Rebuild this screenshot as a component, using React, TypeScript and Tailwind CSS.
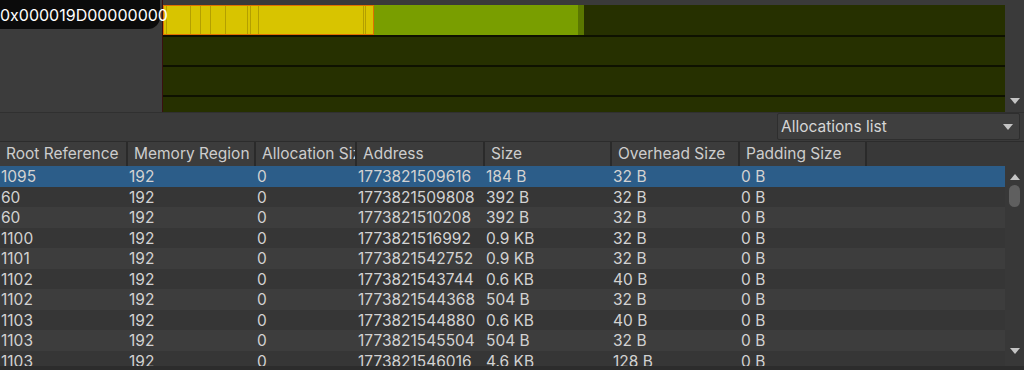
import React from "react";

const rows = [
  ["1095", "192", "0", "1773821509616", "184 B", "32 B", "0 B"],
  ["60", "192", "0", "1773821509808", "392 B", "32 B", "0 B"],
  ["60", "192", "0", "1773821510208", "392 B", "32 B", "0 B"],
  ["1100", "192", "0", "1773821516992", "0.9 KB", "32 B", "0 B"],
  ["1101", "192", "0", "1773821542752", "0.9 KB", "32 B", "0 B"],
  ["1102", "192", "0", "1773821543744", "0.6 KB", "40 B", "0 B"],
  ["1102", "192", "0", "1773821544368", "504 B", "32 B", "0 B"],
  ["1103", "192", "0", "1773821544880", "0.6 KB", "40 B", "0 B"],
  ["1103", "192", "0", "1773821545504", "504 B", "32 B", "0 B"],
  ["1103", "192", "0", "1773821546016", "4.6 KB", "128 B", "0 B"],
];

const cols = [
  { name: "Root Reference", w: "w-[128px]" },
  { name: "Memory Region", w: "w-[128px]" },
  { name: "Allocation Size", w: "w-[101px]" },
  { name: "Address", w: "w-[128px]" },
  { name: "Size", w: "w-[127px]" },
  { name: "Overhead Size", w: "w-[128px]" },
  { name: "Padding Size", w: "w-[127px]" },
];

const stripes = [2, 26, 36, 46, 61, 83, 86, 94, 199, 201];

function TriDown({ className = "" }: { className?: string }) {
  return (
    <svg width="10" height="6" viewBox="0 0 10 6" className={className}>
      <path d="M0 0 L10 0 L5 6 Z" fill="#c4c4c4" />
    </svg>
  );
}
function TriUp({ className = "" }: { className?: string }) {
  return (
    <svg width="10" height="6" viewBox="0 0 10 6" className={className}>
      <path d="M0 6 L10 6 L5 0 Z" fill="#c4c4c4" />
    </svg>
  );
}

export default function App() {
  return (
    <div
      className="w-[1024px] h-[370px] overflow-hidden bg-[#383838] flex flex-col text-[15.5px] text-[#d2d2d2]"
      style={{ fontFamily: "Inter, 'Noto Sans', sans-serif" }}
    >
      {/* Top chart area */}
      <div className="flex h-[112px] shrink-0">
        <div className="w-[162px] bg-[#3c3c3c] relative">
          <div className="h-[29px] bg-[#0b0b0b] rounded-br-[12px] w-[160px] flex items-center">
            <span className="relative z-10 whitespace-nowrap text-[16px] leading-none text-white pl-0">
              0x000019D00000000
            </span>
          </div>
        </div>
        <div className="flex-1 bg-[#3a3a3a] flex flex-col border-l border-[#3a1010]">
          <div className="h-[5px] shrink-0" />
          <div className="flex-1 flex flex-col gap-[2px] bg-[#0e1100] overflow-hidden">
            <div className="h-[30px] shrink-0 flex bg-[#263000]">
              <div className="w-[211px] h-full bg-[#d8c400] border-[1.5px] border-[#e07000] relative">
                {stripes.map((x) => (
                  <div
                    key={x}
                    className="absolute top-0 bottom-0 w-px bg-[#b39f00]"
                    style={{ left: x }}
                  />
                ))}
              </div>
              <div className="w-[204px] h-full bg-[#799e00]" />
              <div className="w-[6px] h-full bg-[#5a7700]" />
            </div>
            <div className="h-[28px] shrink-0 bg-[#263000]" />
            <div className="h-[28px] shrink-0 bg-[#263000]" />
            <div className="h-[28px] shrink-0 bg-[#263000]" />
          </div>
        </div>
        <div className="w-[19px] bg-[#3a3a3a] flex flex-col justify-end items-center pb-[8px]">
          <TriDown />
        </div>
      </div>

      {/* Toolbar */}
      <div className="h-[29px] shrink-0 bg-[#3a3a3a] border-t border-[#303030] flex justify-end pr-[4px]">
        <div className="w-[243px] h-[27px] bg-[#3f3f3f] border border-[#2e2e2e] rounded-[2px] flex items-center justify-between pl-[3px] pr-[6px]">
          <span className="text-[15.5px] text-[#d6d6d6]">Allocations list</span>
          <TriDown />
        </div>
      </div>

      {/* Header */}
      <div className="h-[25px] shrink-0 flex bg-[#383838] border-t border-[#2c2c2c]">
        {cols.map((c) => (
          <div
            key={c.name}
            className={`${c.w} shrink-0 h-full bg-[#3c3c3c] border-r-2 border-[#2a2a2a] flex items-center pl-[6px] overflow-hidden whitespace-nowrap text-[#cdcdcd]`}
          >
            {c.name}
          </div>
        ))}
      </div>

      {/* Body */}
      <div className="flex-1 flex min-h-0">
        <div className="w-[1005px] flex flex-col overflow-hidden">
          {rows.map((r, i) => (
            <div
              key={i}
              className={`h-[20.5px] shrink-0 flex items-center whitespace-nowrap pt-[1px] ${
                i === 0 ? "bg-[#2c5d89]" : i % 2 === 1 ? "bg-[#363636]" : "bg-[#3d3d3d]"
              }`}
            >
              {r.map((v, j) => (
                <div key={j} className={`${cols[j].w} shrink-0 pl-[1px] overflow-hidden`}>
                  {v}
                </div>
              ))}
            </div>
          ))}
        </div>
        <div className="w-[19px] bg-[#383838] flex flex-col items-center pt-[8px] pb-[12px]">
          <TriUp />
          <div className="w-[11px] h-[22px] mt-[5px] rounded-full bg-[#5f5f5f]" />
          <div className="flex-1" />
          <TriDown />
        </div>
      </div>
      <div className="h-[4px] shrink-0 bg-[#2c2c2c]" />
    </div>
  );
}
